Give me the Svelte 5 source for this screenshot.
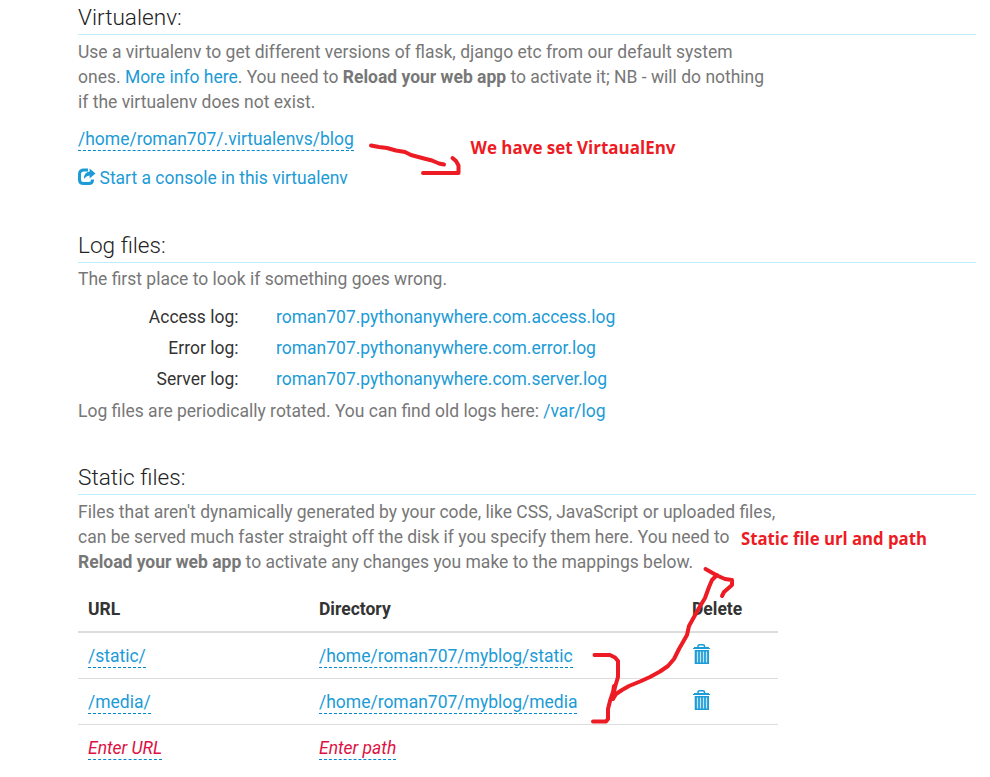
<script>
  const logs = [
    ['Access log:', 'roman707.pythonanywhere.com.access.log'],
    ['Error log:', 'roman707.pythonanywhere.com.error.log'],
    ['Server log:', 'roman707.pythonanywhere.com.server.log']
  ];
  const mappings = [
    ['/static/', '/home/roman707/myblog/static'],
    ['/media/', '/home/roman707/myblog/media']
  ];
</script>

<main>
  <section class="virtualenv">
    <h3>Virtualenv:</h3>
    <p>Use a virtualenv to get different versions of flask, django etc from our default system<br />ones. <a href="#info">More info here</a>. You need to <b>Reload your web app</b> to activate it; NB - will do nothing<br />if the virtualenv does not exist.</p>
    <div class="env"><a class="editable" href="#env">/home/roman707/.virtualenvs/blog</a></div>
    <a class="console" href="#console">
      <svg width="18" height="18" viewBox="0 0 18 18" aria-hidden="true">
        <path d="M10 2H6Q1.5 2 1.5 6.300V11.800Q1.500 15.500 5.500 15.500H10.800Q14.600 15.500 14.600 11.500" fill="none" stroke="currentColor" stroke-width="3" />
        <path d="M11.600 .5 17.500 5.500 11.600 10.500V7.500Q8.500 7.400 5.800 11Q5.900 4.200 11.600 3.500Z" fill="currentColor" />
      </svg>
      <span>Start a console in this virtualenv</span>
    </a>
  </section>

  <section class="logs">
    <h3>Log files:</h3>
    <p>The first place to look if something goes wrong.</p>
    <div class="loglist">
      {#each logs as [label, file]}
        <div class="logrow"><span>{label}</span><a href="#log">{file}</a></div>
      {/each}
    </div>
    <p class="rotated">Log files are periodically rotated. You can find old logs here: <a href="#varlog">/var/log</a></p>
  </section>

  <section class="static">
    <h3>Static files:</h3>
    <p>Files that aren't dynamically generated by your code, like CSS, JavaScript or uploaded files,<br />can be served much faster straight off the disk if you specify them here. You need to<br /><b>Reload your web app</b> to activate any changes you make to the mappings below.</p>
    <div class="table">
      <div class="row head"><span>URL</span><span>Directory</span><span>Delete</span></div>
      {#each mappings as [url, dir]}
        <div class="row">
          <span><a class="editable" href="#url">{url}</a></span>
          <span><a class="editable" href="#dir">{dir}</a></span>
          <svg width="18" height="21" viewBox="0 0 18 21" aria-hidden="true">
            <path d="M6 3V2Q6 .8 7.500 .8H11Q12.500 .8 12.500 2V3" fill="none" stroke="currentColor" stroke-width="1.500" />
            <path d="M2 3H17V4H18V5H1V4H2Z" fill="currentColor" />
            <path d="M2.700 6H17V20H2.700Z" fill="currentColor" />
            <path d="M5.500 7.500V18.500M8.500 7.500V18.500M11.500 7.500V18.500M14.500 7.500V18.500" stroke="#c3e6f5" stroke-width="1.300" />
          </svg>
        </div>
      {/each}
      <div class="row">
        <span><a class="editable empty" href="#url">Enter URL</a></span>
        <span><a class="editable empty" href="#dir">Enter path</a></span>
      </div>
    </div>
  </section>

  <svg class="notes" width="990" height="777" viewBox="0 0 990 777">
    <g class="ink">
      <path d="M371 145.500 379 147 387 148 396 150.500 405 152 411 155 424 158.500 432 160.500 439 163.500 444 164.500" />
      <path d="M423 173H458.500V165.500L456 161 452.500 158" />
      <path d="M594.500 655H610L615 657.500 618 661V677L615 687 612.500 699" />
      <path d="M593 721.500H606L608 719V709L610 701 613 692 614 686" />
      <path d="M613 699 616 694 622 690 629 686 640 681.500 650 677 660 671.500 668 666 674 659 679 649 687 635 689 626 694 617 699 608 705 598 709 587 712 580 717 575" />
      <path d="M705.500 569 717 575.500 725 579 732 580V585L724 592 722 596" />
    </g>
    <text x="470.500" y="154" textLength="205" lengthAdjust="spacingAndGlyphs">We have set VirtaualEnv</text>
    <text x="741" y="545" textLength="186" lengthAdjust="spacingAndGlyphs">Static file url and path</text>
  </svg>
</main>

<style>
  :global(body) { margin: 0; background: #fff; }
  main {
    position: relative; box-sizing: border-box; width: 990px; height: 777px; overflow: hidden;
    padding: 0 14px 0 78px; font: 17.49px/25px Roboto, sans-serif; color: #777; white-space: nowrap;
  }
  section { box-sizing: border-box; }
  .virtualenv { height: 228px; }
  .logs { height: 232px; }
  h3 {
    box-sizing: border-box; height: 35px; margin: 0; padding-top: 4px; border-bottom: 1px solid #bdecff;
    font-size: 22.600px; line-height: 27px; font-weight: 300; color: #222;
  }
  p { margin: 0; padding-top: 5px; }
  a { color: #1c9bd6; text-decoration: none; }
  b { font-weight: 700; }
  .env { padding-top: 12px; }
  .editable { padding-bottom: 1px; border-bottom: 1px dashed #0088cc; }
  .editable.empty { color: #dd1144; font-style: italic; }
  .console { display: flex; align-items: center; gap: 3.500px; margin-top: 14px; }
  .console svg { margin-top: -4px; }
  .logs p:first-of-type { padding-top: 4px; }
  .loglist { padding-top: 10px; }
  .logrow { display: flex; gap: 37.500px; height: 31px; line-height: 31px; }
  .logrow span { width: 160.500px; text-align: right; color: #333; }
  .rotated { padding-top: 4px; }
  .table { width: 700px; margin-top: 11px; }
  .row { display: flex; box-sizing: border-box; height: 46px; padding: 11px 10px 0; border-bottom: 1px solid #ddd; }
  .row:last-child { border: 0; }
  .row > :nth-child(1) { width: 231px; }
  .row > :nth-child(2) { width: 373px; }
  .row svg { color: #1c9bd6; }
  .head { height: 47px; border-bottom-width: 2px; font-weight: 700; color: #333; }
  .notes { position: absolute; inset: 0; pointer-events: none; }
  .ink { fill: none; stroke: #ed1c24; stroke-width: 4; stroke-linecap: round; stroke-linejoin: round; }
  .notes text { font: 700 18px "Open Sans", sans-serif; fill: #ed1c24; }
</style>
